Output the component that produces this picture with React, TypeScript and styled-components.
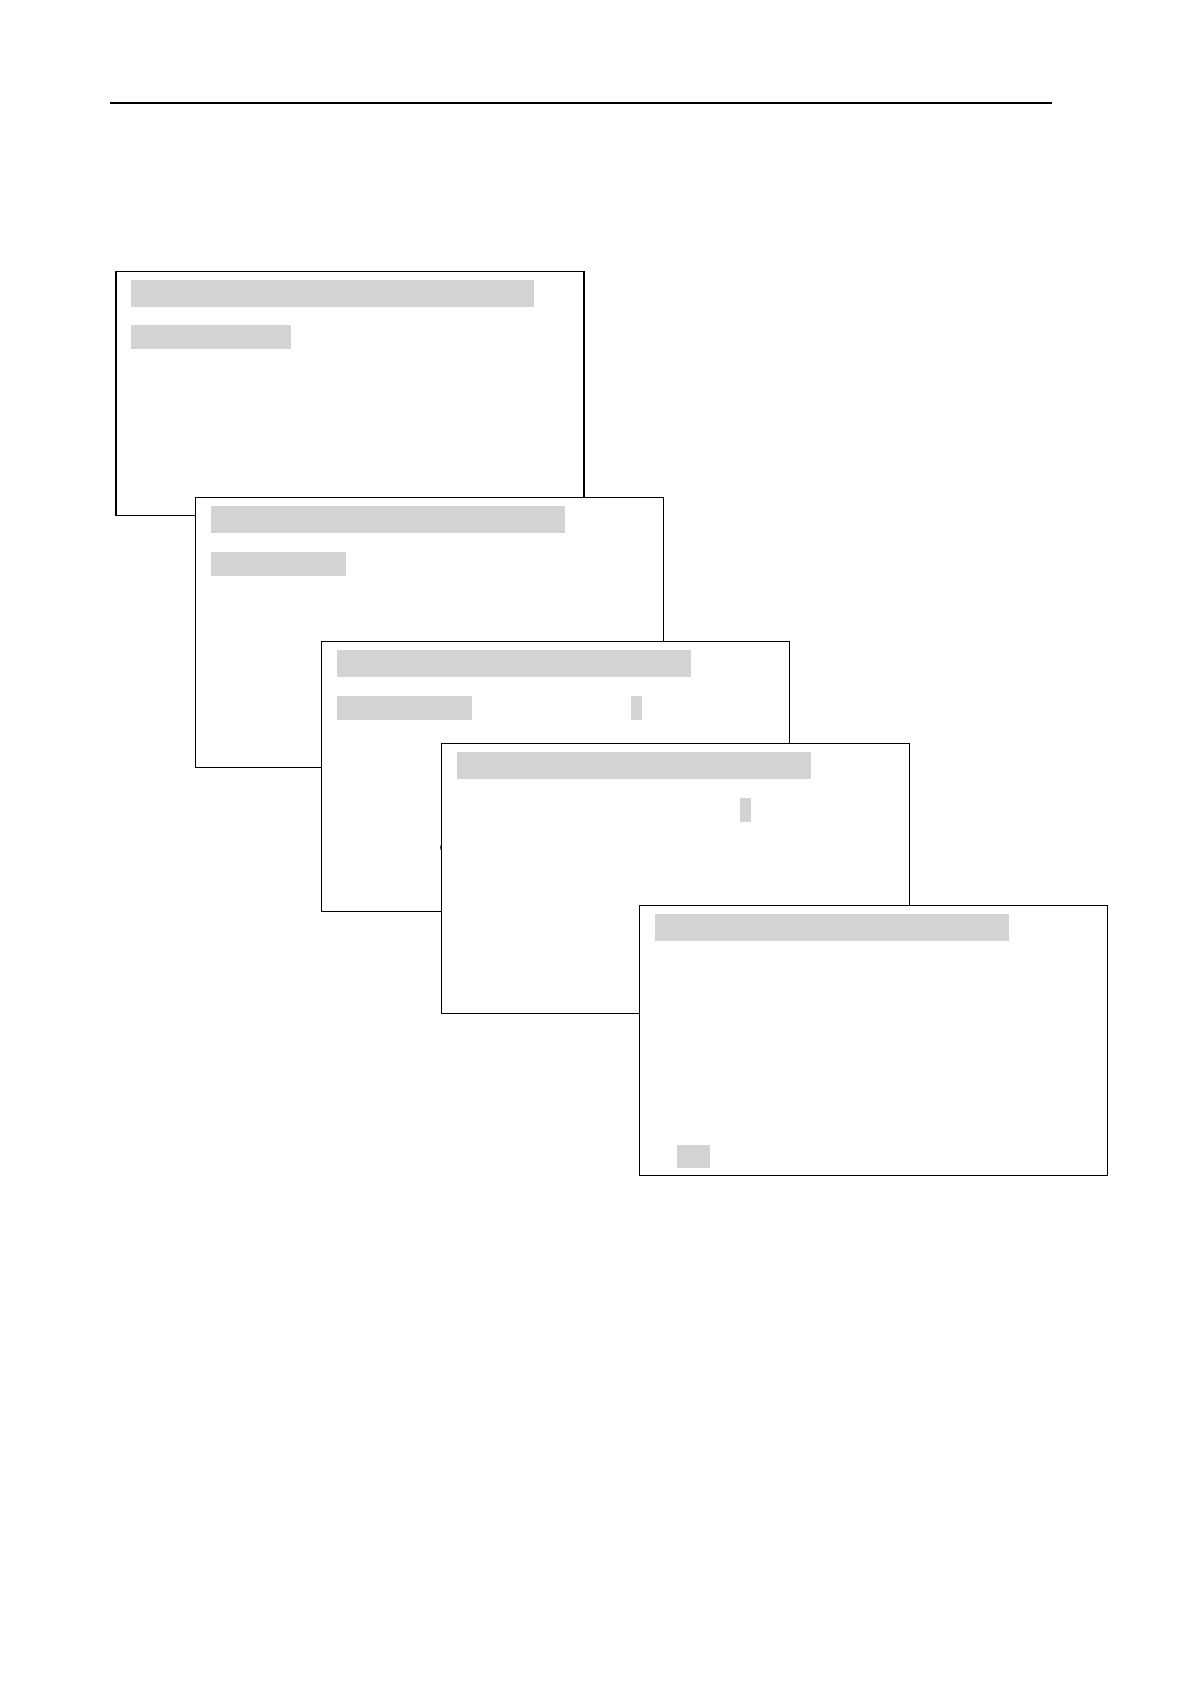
import React from "react";
import styled, { createGlobalStyle } from "styled-components";

const GlobalStyle = createGlobalStyle`
  *, *::before, *::after { box-sizing: border-box; }
  body {
    margin: 0;
    background: #ffffff;
    font-family: "Liberation Sans", sans-serif;
  }
`;

const Page = styled.div`
  display: flex;
  flex-direction: column;
  min-height: 100vh;
`;

const Header = styled.header`
  margin: 102px 139px 0 110px;
  border-top: 2px solid #000000;
`;

/* Free canvas on which the overlapping terminal windows are stacked. */
const Desktop = styled.main`
  position: relative;
  flex: 1;
  min-height: 1100px;
`;

const Window = styled.section<{ $x: number; $y: number; $compact?: boolean }>`
  position: absolute;
  left: ${({ $x }) => $x}px;
  top: ${({ $y }) => $y}px;
  display: flex;
  flex-direction: column;
  gap: ${({ $compact }) => ($compact ? 18 : 19)}px;
  width: ${({ $compact }) => ($compact ? 470 : 469)}px;
  height: ${({ $compact }) => ($compact ? 245 : 271)}px;
  padding: ${({ $compact }) => ($compact ? "8px 14px 7px" : "8px 15px 7px")};
  border: solid #000000;
  border-width: ${({ $compact }) => ($compact ? "1px 2px" : "1px")};
  background: #ffffff;
`;

const TitleBar = styled.div<{ $width: number }>`
  flex: none;
  width: ${({ $width }) => $width}px;
  height: 27px;
  background: #d3d3d3;
`;

const Row = styled.div`
  display: flex;
  height: 24px;
`;

const Highlight = styled.div<{ $width: number; $before?: number }>`
  width: ${({ $width }) => $width}px;
  margin-left: ${({ $before = 0 }) => $before}px;
  background: #d3d3d3;
`;

const Footer = styled.div`
  display: flex;
  height: 23px;
  margin-top: auto;
`;

/* Tip of a connector that ends on the left edge of a window. */
const ConnectorTip = styled.span`
  position: absolute;
  left: -2px;
  top: 101px;
  width: 1px;
  height: 5px;
  background: linear-gradient(#b0b0b0, #333333 50%, #b0b0b0);
`;

type Field = { width: number; before?: number };

type WindowSpec = {
  id: string;
  x: number;
  y: number;
  title: number;
  compact?: boolean;
  fields?: Field[];
  footer?: Field;
  connector?: boolean;
};

const windows: WindowSpec[] = [
  { id: "first", x: 115, y: 167, title: 403, compact: true, fields: [{ width: 160 }] },
  { id: "second", x: 195, y: 393, title: 354, fields: [{ width: 135 }] },
  {
    id: "third",
    x: 321,
    y: 537,
    title: 354,
    fields: [{ width: 135 }, { width: 11, before: 159 }],
  },
  {
    id: "fourth",
    x: 441,
    y: 639,
    title: 354,
    fields: [{ width: 11, before: 283 }],
    connector: true,
  },
  { id: "fifth", x: 639, y: 801, title: 354, footer: { width: 33, before: 22 } },
];

export default function App() {
  return (
    <>
      <GlobalStyle />
      <Page>
        <Header />
        <Desktop>
          {windows.map((w) => (
            <Window key={w.id} $x={w.x} $y={w.y} $compact={w.compact}>
              <TitleBar $width={w.title} />
              {w.fields && (
                <Row>
                  {w.fields.map((f, i) => (
                    <Highlight key={i} $width={f.width} $before={f.before} />
                  ))}
                </Row>
              )}
              {w.footer && (
                <Footer>
                  <Highlight $width={w.footer.width} $before={w.footer.before} />
                </Footer>
              )}
              {w.connector && <ConnectorTip />}
            </Window>
          ))}
        </Desktop>
      </Page>
    </>
  );
}
